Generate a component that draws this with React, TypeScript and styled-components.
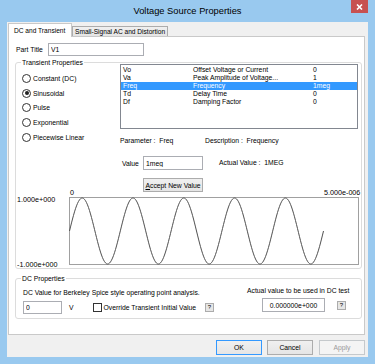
import React from "react";
import styled, { createGlobalStyle } from "styled-components";

const GlobalStyle = createGlobalStyle`
  html, body {
    margin: 0;
    padding: 0;
  }
  body {
    background: #99c9ef;
    font-family: "Liberation Sans", Arial, sans-serif;
    font-size: 6.8px;
    color: #000;
  }
  * {
    box-sizing: border-box;
  }
`;

const PARAMS = [
  { name: "Vo", desc: "Offset Voltage or Current", value: "0" },
  { name: "Va", desc: "Peak Amplitude of Voltage...", value: "1" },
  { name: "Freq", desc: "Frequency", value: "1meg" },
  { name: "Td", desc: "Delay Time", value: "0" },
  { name: "Df", desc: "Damping Factor", value: "0" },
];

const SOURCES = ["Constant (DC)", "Sinusoidal", "Pulse", "Exponential", "Piecewise Linear"];

// 5 periods of 1MHz over the 5us span, 254px wide
const wavePath = (() => {
  const pts: string[] = [];
  for (let x = 0; x <= 254; x += 1) {
    const y = 34 - 33 * Math.sin((2 * Math.PI * x) / 50.8);
    pts.push(`${x === 0 ? "M" : "L"}${(x + 0.5).toFixed(1)} ${y.toFixed(2)}`);
  }
  return pts.join(" ");
})();

export default function App() {
  return (
    <>
      <GlobalStyle />
      <Window>
        <TitleBar>
          <span />
          <Title>Voltage Source Properties</Title>
          <CloseButton>
            <svg width="7" height="6" viewBox="0 0 7 6">
              <path d="M1 0.5 L6 5.5 M6 0.5 L1 5.5" stroke="#fff" strokeWidth="1.6" />
            </svg>
          </CloseButton>
        </TitleBar>

        <Client>
          <TabStrip>
            <Tab $active>DC and Transient</Tab>
            <Tab>Small-Signal AC and Distortion</Tab>
          </TabStrip>

          <Panel>
            <PartRow>
              <PartLabel>Part Title</PartLabel>
              <TextBox $width={96} $height={13} defaultValue="V1" />
            </PartRow>

            <GroupBox $top={6}>
              <Legend>Transient Properties</Legend>
              <TopSection>
                <RadioColumn>
                  {SOURCES.map((s) => (
                    <RadioItem key={s}>
                      <RadioCircle>{s === "Sinusoidal" && <RadioDot />}</RadioCircle>
                      {s}
                    </RadioItem>
                  ))}
                </RadioColumn>

                <RightColumn>
                  <ListBox>
                    {PARAMS.map((p) => (
                      <ListRow key={p.name} $selected={p.name === "Freq"}>
                        <span>{p.name}</span>
                        <span>{p.desc}</span>
                        <span>{p.value}</span>
                      </ListRow>
                    ))}
                  </ListBox>

                  <InfoRow>
                    <InfoCell>Parameter :&nbsp; Freq</InfoCell>
                    <span>Description :&nbsp; Frequency</span>
                  </InfoRow>

                  <ValueRow>
                    <ValueLabel>Value</ValueLabel>
                    <TextBox $width={60} $height={14} defaultValue="1meg" />
                    <ActualValue>Actual Value :&nbsp; 1MEG</ActualValue>
                  </ValueRow>

                  <AcceptButton>
                    <u>A</u>ccept New Value
                  </AcceptButton>
                </RightColumn>
              </TopSection>

              <ChartArea>
                <span />
                <XAxis>
                  <span>0</span>
                  <span>5.000e-006</span>
                </XAxis>
                <YAxis>
                  <span>1.000e+000</span>
                  <span>-1.000e+000</span>
                </YAxis>
                <svg width="290" height="68" viewBox="0 0 290 68">
                  <rect x="0.5" y="0.5" width="289" height="67" fill="#fff" stroke="#a0a0a0" />
                  <path d={wavePath} fill="none" stroke="#505050" strokeWidth="1" />
                </svg>
              </ChartArea>
            </GroupBox>

            <GroupBox $top={9}>
              <Legend>DC Properties</Legend>
              <DCBody>
                <DCLeft>
                  <TextLine>DC Value for Berkeley Spice style operating point analysis.</TextLine>
                  <DCRow>
                    <TextBox $width={39} $height={13} defaultValue="0" />
                    <Unit>V</Unit>
                    <CheckBox />
                    <CheckLabel>Override Transient Initial Value</CheckLabel>
                    <HelpButton>?</HelpButton>
                  </DCRow>
                </DCLeft>
                <DCRight>
                  <TextLine>Actual value to be used in DC test</TextLine>
                  <DCValueRow>
                    <ReadOnlyBox>0.000000e+000</ReadOnlyBox>
                    <HelpButton $gap={12}>?</HelpButton>
                  </DCValueRow>
                </DCRight>
              </DCBody>
            </GroupBox>
          </Panel>

          <ButtonRow>
            <DialogButton $variant="default">OK</DialogButton>
            <DialogButton>Cancel</DialogButton>
            <DialogButton $variant="disabled">Apply</DialogButton>
          </ButtonRow>
        </Client>
      </Window>
    </>
  );
}

const Window = styled.div`
  width: 375px;
  height: 364px;
  background: #99c9ef;
  display: flex;
  flex-direction: column;
  padding: 0 7px 7px;
`;

const TitleBar = styled.div`
  height: 22px;
  display: grid;
  grid-template-columns: 1fr auto 1fr;
  align-items: center;
`;

const Title = styled.span`
  font-size: 9.3px;
  color: #000;
`;

const CloseButton = styled.div`
  justify-self: end;
  align-self: start;
  width: 17px;
  height: 13px;
  background: #c75050;
  display: flex;
  align-items: center;
  justify-content: center;
`;

const Client = styled.div`
  flex: 1;
  background: #f0f0f0;
  display: flex;
  flex-direction: column;
  padding: 1px 3px 2px 1px;
`;

const TabStrip = styled.div`
  display: flex;
  align-items: flex-end;
  height: 14px;
  margin-bottom: -1px;
  position: relative;
  z-index: 1;
`;

const Tab = styled.div<{ $active?: boolean }>`
  display: flex;
  align-items: center;
  font-size: 6.6px;
  white-space: nowrap;
  height: ${(p) => (p.$active ? 14 : 10)}px;
  width: ${(p) => (p.$active ? 64 : 96)}px;
  margin-bottom: ${(p) => (p.$active ? 0 : 1)}px;
  padding-left: ${(p) => (p.$active ? 5 : 2)}px;
  background: ${(p) => (p.$active ? "#fff" : "linear-gradient(#f0f0f0, #e5e5e5)")};
  border: 1px solid ${(p) => (p.$active ? "#c9c9c9" : "#acacac")};
  border-bottom: none;
`;

const Panel = styled.div`
  height: 299px;
  background: #fff;
  border: 1px solid #c9c9c9;
  display: flex;
  flex-direction: column;
  padding: 6px 2px 0 6px;
`;

const PartRow = styled.div`
  display: flex;
  align-items: center;
  height: 13px;
  margin-left: 1px;
`;

const PartLabel = styled.span`
  width: 32px;
`;

const TextBox = styled.input<{ $width: number; $height: number }>`
  width: ${(p) => p.$width}px;
  height: ${(p) => p.$height}px;
  border: 1px solid #abadb3;
  background: #fff;
  padding: 0 2px;
  margin: 0;
  font-family: "Liberation Sans", Arial, sans-serif;
  font-size: 6.8px;
  color: #000;
  outline: none;
`;

const GroupBox = styled.div<{ $top: number }>`
  position: relative;
  margin-top: ${(p) => p.$top}px;
  border: 1px solid #dcdcdc;
  border-radius: 3px;
  padding: 1px 1px 3px 0;
`;

const Legend = styled.span`
  position: absolute;
  top: -5px;
  left: 5px;
  line-height: 9px;
  padding: 0 1px;
  background: #fff;
`;

const TopSection = styled.div`
  display: flex;
`;

const RadioColumn = styled.div`
  width: 104px;
  padding: 7px 0 0 6px;
  display: flex;
  flex-direction: column;
`;

const RadioItem = styled.label`
  height: 14.7px;
  display: flex;
  align-items: center;
  gap: 2px;
`;

const RadioCircle = styled.span`
  width: 9px;
  height: 9px;
  border: 1px solid #333;
  border-radius: 50%;
  background: #fff;
  display: inline-flex;
  align-items: center;
  justify-content: center;
`;

const RadioDot = styled.span`
  width: 4px;
  height: 4px;
  border-radius: 50%;
  background: #222;
`;

const RightColumn = styled.div`
  width: 238px;
  display: flex;
  flex-direction: column;
`;

const ListBox = styled.div`
  height: 65px;
  border: 1px solid #828790;
  padding-top: 1px;
  background: #fff;
`;

const ListRow = styled.div<{ $selected?: boolean }>`
  display: grid;
  grid-template-columns: 70px 120px 1fr;
  height: 8px;
  line-height: 8px;
  padding-left: 2px;
  white-space: nowrap;
  background: ${(p) => (p.$selected ? "#3399ff" : "transparent")};
  color: ${(p) => (p.$selected ? "#fff" : "#000")};
`;

const InfoRow = styled.div`
  display: flex;
  margin-top: 6.5px;
  line-height: 9px;
`;

const InfoCell = styled.span`
  width: 85px;
`;

const ValueRow = styled.div`
  display: flex;
  align-items: center;
  margin-top: 11.5px;
  height: 14px;
`;

const ValueLabel = styled.span`
  width: 21px;
  margin-left: 2px;
`;

const ActualValue = styled.span`
  margin-left: 16px;
  margin-top: -2px;
`;

const ButtonBase = styled.button`
  font-family: "Liberation Sans", Arial, sans-serif;
  font-size: 6.8px;
  color: #000;
  background: linear-gradient(#f0f0f0, #e5e5e5);
  border: 1px solid #acacac;
  padding: 0;
  margin: 0;
  white-space: nowrap;
`;

const AcceptButton = styled(ButtonBase)`
  width: 60px;
  height: 14px;
  margin: 8px 0 0 23px;
`;

const ChartArea = styled.div`
  margin-top: -3px;
  display: grid;
  grid-template-columns: 53px 290px;
  grid-template-rows: 8px 68px;
  font-size: 7.2px;

  svg {
    display: block;
  }
`;

const XAxis = styled.div`
  display: grid;
  grid-template-columns: 254px auto;
  line-height: 8px;
  white-space: nowrap;
  padding-left: 1px;
`;

const YAxis = styled.div`
  display: flex;
  flex-direction: column;
  justify-content: space-between;
  margin: -2px 0 -4px;
  padding-left: 1px;
  line-height: 9px;
  white-space: nowrap;
`;

const DCBody = styled.div`
  display: flex;
  justify-content: space-between;
  padding: 8px 9px 1px 7px;
`;

const DCLeft = styled.div`
  display: flex;
  flex-direction: column;
`;

const DCRight = styled.div`
  width: 104px;
  display: flex;
  flex-direction: column;
  margin-top: -2px;
`;

const TextLine = styled.div`
  line-height: 9px;
  white-space: nowrap;
`;

const DCRow = styled.div`
  display: flex;
  align-items: center;
  margin-top: 4px;
`;

const DCValueRow = styled(DCRow)`
  margin-top: 3px;
  padding-left: 15px;
`;

const Unit = styled.span`
  margin-left: 7px;
`;

const CheckBox = styled.span`
  width: 9px;
  height: 9px;
  border: 1px solid #333;
  background: #fff;
  margin-left: 19px;
`;

const CheckLabel = styled.span`
  margin-left: 2px;
  white-space: nowrap;
`;

const HelpButton = styled.span<{ $gap?: number }>`
  width: 9px;
  height: 9px;
  margin-left: ${(p) => p.$gap ?? 9}px;
  border: 1px solid #acacac;
  background: #e6e6e6;
  font-size: 6px;
  line-height: 7px;
  text-align: center;
`;

const ReadOnlyBox = styled.div`
  width: 63px;
  height: 14px;
  border: 1px solid #abadb3;
  background: #fff;
  display: flex;
  align-items: center;
  justify-content: center;
`;

const ButtonRow = styled.div`
  display: flex;
  justify-content: flex-end;
  gap: 5px;
  margin-top: 5px;
`;

const DialogButton = styled(ButtonBase)<{ $variant?: "default" | "disabled" }>`
  width: 46px;
  height: 15px;
  border-color: ${(p) =>
    p.$variant === "default" ? "#3399ff" : p.$variant === "disabled" ? "#c5c9cc" : "#acacac"};
  background: ${(p) => (p.$variant === "disabled" ? "#f4f4f4" : "linear-gradient(#f0f0f0, #e5e5e5)")};
  color: ${(p) => (p.$variant === "disabled" ? "#9a9a9a" : "#000")};

  &:last-child {
    margin-left: 1px;
  }
`;
